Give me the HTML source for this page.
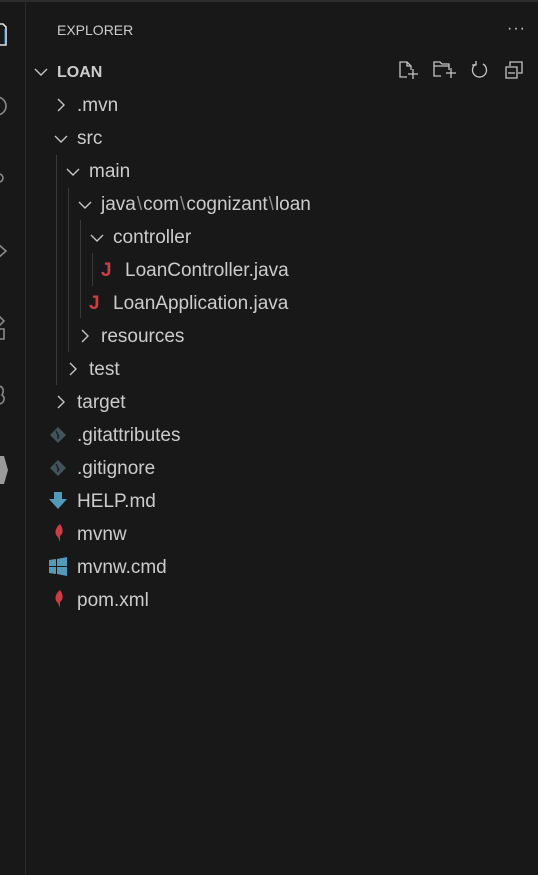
<!DOCTYPE html>
<html><head><style>
html,body{margin:0;padding:0;}
body{width:538px;height:875px;background:#181818;position:relative;overflow:hidden;font-family:"Liberation Sans",sans-serif;color:#cccccc;}
.ab{position:absolute;left:0;top:0;width:25px;height:875px;border-right:1px solid #2b2b2b;}
.top{position:absolute;left:0;top:0;width:538px;height:2px;background:#2b2b2b;}
.t{position:absolute;font-size:19px;line-height:33px;height:33px;white-space:nowrap;}
.g{position:absolute;width:1px;background:#3a3a3a;}
svg{position:absolute;overflow:visible;}
.sep{color:#8a8a8a;margin:0 1px;}
</style></head><body>
<div class="top"></div>
<div class="ab"></div>
<svg width="25" height="500" style="left:0;top:0">
<g fill="none" stroke="#c5c5c5" stroke-width="1.6">
<path d="M-2 24 L3 24 L6 27 L6 45 L-2 45" stroke="#e0e0e0"/>
<path d="M5 29 L5 44" stroke="#3794ff" stroke-width="1"/>
<circle cx="-3" cy="106" r="9" stroke="#8a8a8a"/>
<circle cx="-1" cy="178" r="4" stroke="#8a8a8a"/>
<path d="M-2 244 L6 251 L-2 258" stroke="#8a8a8a"/>
<path d="M-2 315 L4 321 L-2 327 M-2 329 L4 329 L4 339 L-2 339" stroke="#8a8a8a"/>
<path d="M-2 386 C4 386 4 392 2 395 C6 398 4 404 -2 404" stroke="#8a8a8a"/>
</g>
<path d="M-2 456 L4 456 L8 470 L4 484 L-2 484Z" fill="#9a9a9a"/>
</svg>

<div class="t" style="left:57px;top:14px;font-size:14px;">EXPLORER</div>
<div class="t" style="left:507px;top:12px;font-size:16px;letter-spacing:1px;">···</div>

<svg width="140" height="30" style="left:396px;top:58px">
<g fill="none" stroke="#c5c5c5" stroke-width="1.3">
<path d="M11 19 L4 19 L4 4 L11 4 L15 8 L15 12 M11 4 L11 8 L15 8 M12 16 L22 16 M17 11 L17 21"/>
<path d="M45 18 L38 18 L38 4 L44 4 L46 6 L53 6 L53 12 M38 8 L53 8 M50 15 L60 15 M55 10 L55 20"/>
<path d="M80 6 A7 7 0 1 0 87 6 M80 3 L80 7 L76 7"/>
<path d="M114 8 L114 4 L126 4 L126 15 L122 15 M110 9 L121 9 L121 20 L110 20 Z M112 15 L119 15"/>
</g>
</svg>

<svg width="200" height="400" style="left:0;top:0">
<g fill="none" stroke="#c5c5c5" stroke-width="1.4">
<path d="M35 69 L41 75 L47 69"/>
<path d="M58 99 L64 105 L58 111"/>
<path d="M55 136 L61 142 L67 136"/>
<path d="M67 169 L73 175 L79 169"/>
<path d="M79 202 L85 208 L91 202"/>
<path d="M91 235 L97 241 L103 235"/>
<path d="M82 330 L88 336 L82 342"/>
<path d="M70 363 L76 369 L70 375"/>
<path d="M58 396 L64 402 L58 408"/>
</g>
</svg>

<div class="g" style="left:56px;top:155px;height:230px"></div>
<div class="g" style="left:68px;top:188px;height:164px"></div>
<div class="g" style="left:80px;top:220px;height:98px"></div>
<div class="g" style="left:92px;top:253px;height:33px"></div>

<div class="t" style="left:57px;top:56px;font-weight:bold;font-size:16px;">LOAN</div>
<div class="t" style="left:77px;top:89px">.mvn</div>
<div class="t" style="left:77px;top:122px">src</div>
<div class="t" style="left:89px;top:155px">main</div>
<div class="t" style="left:101px;top:188px">java<span class="sep">\</span>com<span class="sep">\</span>cognizant<span class="sep">\</span>loan</div>
<div class="t" style="left:113px;top:221px">controller</div>
<div class="t" style="left:101px;top:254px;color:#cc3e44;font-weight:bold;">J</div>
<div class="t" style="left:125px;top:254px">LoanController.java</div>
<div class="t" style="left:89px;top:287px;color:#cc3e44;font-weight:bold;">J</div>
<div class="t" style="left:113px;top:287px">LoanApplication.java</div>
<div class="t" style="left:101px;top:320px">resources</div>
<div class="t" style="left:89px;top:353px">test</div>
<div class="t" style="left:77px;top:386px">target</div>
<div class="t" style="left:77px;top:419px">.gitattributes</div>
<div class="t" style="left:77px;top:452px">.gitignore</div>
<div class="t" style="left:77px;top:485px">HELP.md</div>
<div class="t" style="left:77px;top:518px">mvnw</div>
<div class="t" style="left:77px;top:551px">mvnw.cmd</div>
<div class="t" style="left:77px;top:584px">pom.xml</div>

<svg width="80" height="620" style="left:0;top:0">
<path d="M58 427 L66 435 L58 443 L50 435Z" fill="#41535b"/>
<path d="M58 460 L66 468 L58 476 L50 468Z" fill="#41535b"/>
<path d="M56 431 L59 437 M58 434 L58 439" stroke="#181818" stroke-width="1.2"/>
<path d="M56 464 L59 470 M58 467 L58 472" stroke="#181818" stroke-width="1.2"/>
<path d="M54 492 L62 492 L62 499 L67 499 L58 509 L49 499 L54 499Z" fill="#519aba"/>
<path d="M60 524 C55 528 54 534 58 537 L60 542 L60 536 C64 533 63 528 60 524Z" fill="#cc3e44"/>
<path d="M60 590 C55 594 54 600 58 603 L60 608 L60 602 C64 599 63 594 60 590Z" fill="#cc3e44"/>
<g fill="#519aba">
<path d="M49 560 L56 559 L56 566 L49 566Z"/><path d="M57 559 L67 557 L67 566 L57 566Z"/>
<path d="M49 567 L56 567 L56 574 L49 573Z"/><path d="M57 567 L67 567 L67 576 L57 574Z"/>
</g>
</svg>
</body></html>
